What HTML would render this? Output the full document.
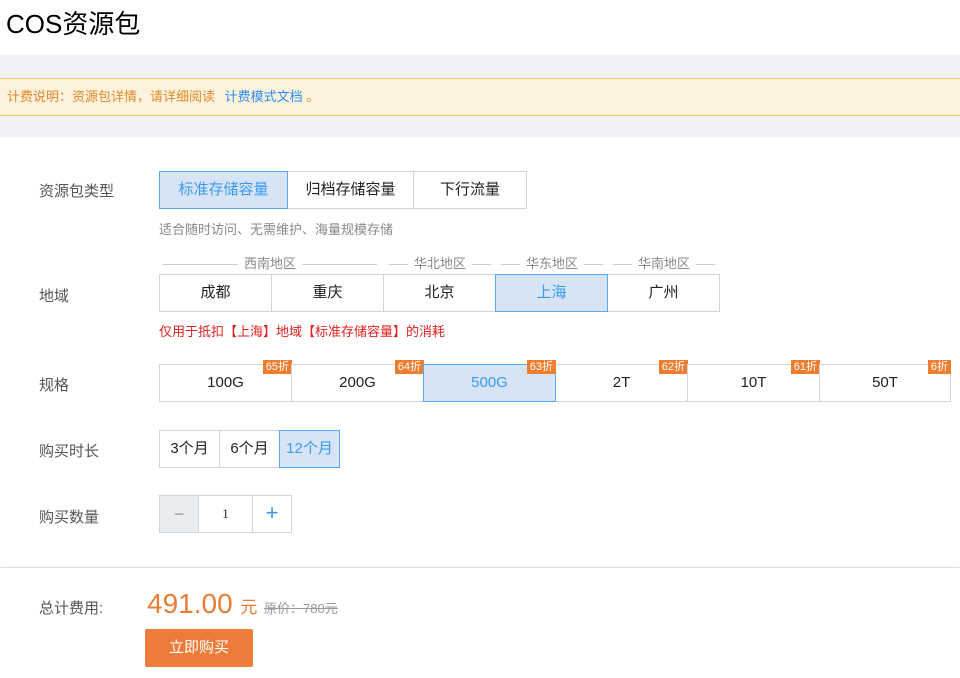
<!DOCTYPE html>
<html><head><meta charset="utf-8"><style>
*{box-sizing:border-box;margin:0;padding:0}
body{width:960px;height:678px;overflow:hidden;background:#fff;font-family:"Liberation Sans","Noto Sans CJK SC",sans-serif;color:#333;position:relative}
.a{position:absolute}
.title{left:6px;top:4px;font-size:26px;color:#000}
.band{left:0;top:55px;width:960px;height:82px;background:#f0f2f5}
.warn{left:0;top:78px;width:960px;height:38px;background:#fdf3dc;border-top:1px solid #f5c86a;border-bottom:1px solid #f5c86a;font-size:13px;color:#e0892a;line-height:36px;padding-left:7px}
.warn span{color:#2d8cf0;margin-left:6px}
.lab{left:39px;font-size:15px;color:#555}
.btn{position:absolute;border:1px solid #d0d4dc;background:#fff;text-align:center;font-size:15px;color:#222}
.sel{background:#d6e4f6;border-color:#5aa8f0;color:#3a9af0;z-index:2}
.hint{font-size:13px;color:#888}
.badge{position:absolute;top:-5px;right:-1px;background:#ef7d30;color:#fff;font-size:11px;line-height:14px;padding:0 3px}
.rg{font-size:13px;color:#888;top:256px;height:16px;line-height:16px;display:flex;align-items:center}
.rg i{flex:1;height:1px;background:#ccc;display:block}
.rg b{font-weight:normal;padding:0 6px}
.foot{left:0;top:567px;width:960px;height:111px;border-top:1px solid #dde1e8;box-shadow:0 -2px 3px rgba(0,0,0,.04)}
</style></head><body>
<div class="a title">COS资源包</div>
<div class="a band"></div>
<div class="a warn">计费说明：资源包详情，请详细阅读 <span>计费模式文档</span> 。</div>

<div class="a lab" style="top:180px">资源包类型</div>
<div class="btn sel" style="left:159px;top:171px;width:129px;height:38px;line-height:36px">标准存储容量</div>
<div class="btn" style="left:287px;top:171px;width:127px;height:38px;line-height:36px">归档存储容量</div>
<div class="btn" style="left:413px;top:171px;width:114px;height:38px;line-height:36px">下行流量</div>
<div class="a hint" style="left:159px;top:219px">适合随时访问、无需维护、海量规模存储</div>

<div class="a rg" style="left:163px;width:214px"><i></i><b>西南地区</b><i></i></div>
<div class="a rg" style="left:389px;width:102px"><i></i><b>华北地区</b><i></i></div>
<div class="a rg" style="left:501px;width:102px"><i></i><b>华东地区</b><i></i></div>
<div class="a rg" style="left:613px;width:102px"><i></i><b>华南地区</b><i></i></div>
<div class="a lab" style="top:285px">地域</div>
<div class="btn" style="left:159px;top:274px;width:113px;height:38px;line-height:36px">成都</div>
<div class="btn" style="left:271px;top:274px;width:113px;height:38px;line-height:36px">重庆</div>
<div class="btn" style="left:383px;top:274px;width:113px;height:38px;line-height:36px">北京</div>
<div class="btn sel" style="left:495px;top:274px;width:113px;height:38px;line-height:36px">上海</div>
<div class="btn" style="left:607px;top:274px;width:113px;height:38px;line-height:36px">广州</div>
<div class="a" style="left:159px;top:321px;font-size:13px;color:#e02020">仅用于抵扣【上海】地域【标准存储容量】的消耗</div>

<div class="a lab" style="top:374px">规格</div>
<div class="btn" style="left:159px;top:364px;width:133px;height:38px;line-height:36px">100G<span class="badge">65折</span></div>
<div class="btn" style="left:291px;top:364px;width:133px;height:38px;line-height:36px">200G<span class="badge">64折</span></div>
<div class="btn sel" style="left:423px;top:364px;width:133px;height:38px;line-height:36px">500G<span class="badge">63折</span></div>
<div class="btn" style="left:555px;top:364px;width:133px;height:38px;line-height:36px">2T<span class="badge">62折</span></div>
<div class="btn" style="left:687px;top:364px;width:133px;height:38px;line-height:36px">10T<span class="badge">61折</span></div>
<div class="btn" style="left:819px;top:364px;width:132px;height:38px;line-height:36px">50T<span class="badge">6折</span></div>

<div class="a lab" style="top:440px">购买时长</div>
<div class="btn" style="left:159px;top:430px;width:61px;height:38px;line-height:36px">3个月</div>
<div class="btn" style="left:219px;top:430px;width:61px;height:38px;line-height:36px">6个月</div>
<div class="btn sel" style="left:279px;top:430px;width:61px;height:38px;line-height:36px">12个月</div>

<div class="a lab" style="top:506px">购买数量</div>
<div class="btn" style="left:159px;top:495px;width:40px;height:38px;line-height:36px;background:#e9edf2;color:#999;font-size:18px">−</div>
<div class="btn" style="left:198px;top:495px;width:55px;height:38px;line-height:36px;font-family:'Liberation Serif',serif;font-size:13px">1</div>
<div class="btn" style="left:252px;top:495px;width:40px;height:38px;line-height:34px;color:#3a9af0;font-size:22px">+</div>

<div class="a foot"></div>
<div class="a lab" style="top:597px">总计费用:</div>
<div class="a" style="left:147px;top:588px;font-size:28px;color:#e87d35">491.00 <span style="font-size:17px">元</span></div>
<div class="a" style="left:264px;top:598px;font-size:13px;color:#999;text-decoration:line-through">原价：780元</div>
<div class="a" style="left:145px;top:629px;width:108px;height:38px;background:#ed7c3a;color:#fff;font-size:15px;text-align:center;line-height:38px;border-radius:2px">立即购买</div>
</body></html>
